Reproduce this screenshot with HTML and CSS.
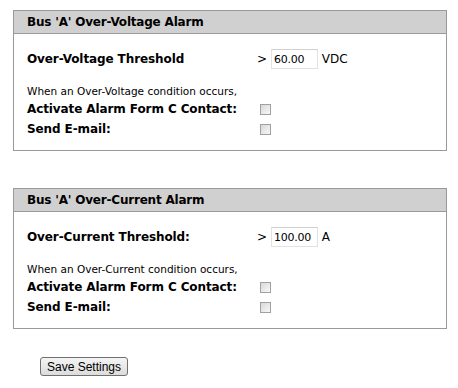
FILE: index.html
```html
<!DOCTYPE html>
<html lang="en">
<head>
    <meta charset="UTF-8">
    <title>Bus A Alarms</title>
    <link rel="stylesheet" href="styles.css">
</head>
<body>

    <!-- Over-Voltage -->
    <div class="panel">
        <div class="panel-head">Bus 'A' Over-Voltage Alarm</div>
        <div class="panel-body">
            <div class="row threshold">
                <label>Over-Voltage Threshold</label>
                <div class="value">&gt; <input type="text" class="num" value="60.00"> VDC</div>
            </div>
            <div class="note">When an Over-Voltage condition occurs,</div>
            <div class="row">
                <label>Activate Alarm Form C Contact:</label>
                <div class="value"><input type="checkbox" class="chk"></div>
            </div>
            <div class="row">
                <label>Send E-mail:</label>
                <div class="value"><input type="checkbox" class="chk"></div>
            </div>
        </div>
    </div>

    <!-- Over-Current -->
    <div class="panel">
        <div class="panel-head">Bus 'A' Over-Current Alarm</div>
        <div class="panel-body">
            <div class="row threshold">
                <label>Over-Current Threshold:</label>
                <div class="value">&gt; <input type="text" class="num" value="100.00"> A</div>
            </div>
            <div class="note">When an Over-Current condition occurs,</div>
            <div class="row">
                <label>Activate Alarm Form C Contact:</label>
                <div class="value"><input type="checkbox" class="chk"></div>
            </div>
            <div class="row">
                <label>Send E-mail:</label>
                <div class="value"><input type="checkbox" class="chk"></div>
            </div>
        </div>
    </div>

    <button class="btn">Save Settings</button>

</body>
</html>
```

FILE: styles.css
```css
* {
    box-sizing: border-box;
}
body {
    margin: 0;
    padding: 10px 0 0 13px;
    background: #fff;
    color: #000;
    font-family: 'DejaVu Sans', Verdana, sans-serif;
}
.panel {
    width: 434px;
    border: 1px solid #999;
    margin-bottom: 37px;
}
.panel-head {
    height: 23px;
    line-height: 22px;
    padding-left: 13px;
    background: #d0d0d0;
    border-bottom: 1px solid #9a9a9a;
    font-size: 12px;
    letter-spacing: -0.2px;
    font-weight: bold;
}
.panel-body {
    padding: 15px 13px 11px;
}
.row {
    display: grid;
    grid-template-columns: 230px auto;
    align-items: center;
    height: 20px;
    font-size: 12px;
    letter-spacing: -0.1px;
    font-weight: bold;
}
.value {
    font-size: 12px;
    letter-spacing: 0;
    font-weight: normal;
}
.num {
    width: 47px;
    height: 20px;
    padding: 0 2px;
    border: 1px solid #e2e2e2;
    border-top-color: #d0d0d0;
    font-family: 'DejaVu Sans', Verdana, sans-serif;
    font-size: 11px;
    letter-spacing: -0.2px;
    vertical-align: middle;
}
.note {
    margin-top: 15px;
    font-size: 10.5px;
    line-height: 15px;
}
.chk {
    appearance: none;
    width: 11px;
    height: 11px;
    margin: 0 0 0 3px;
    border: 1px solid #a0a0a0;
    background: linear-gradient(135deg, #d8d8d8, #f8f8f8);
    vertical-align: middle;
}
.btn {
    display: block;
    margin: -9px 0 0 27px;
    width: 88px;
    height: 19px;
    padding: 0;
    border: 1px solid #707070;
    border-radius: 3px;
    background: linear-gradient(#f4f4f4, #dcdcdc);
    font-family: 'Liberation Sans', Arial, sans-serif;
    font-size: 12px;
    color: #000;
}
```
